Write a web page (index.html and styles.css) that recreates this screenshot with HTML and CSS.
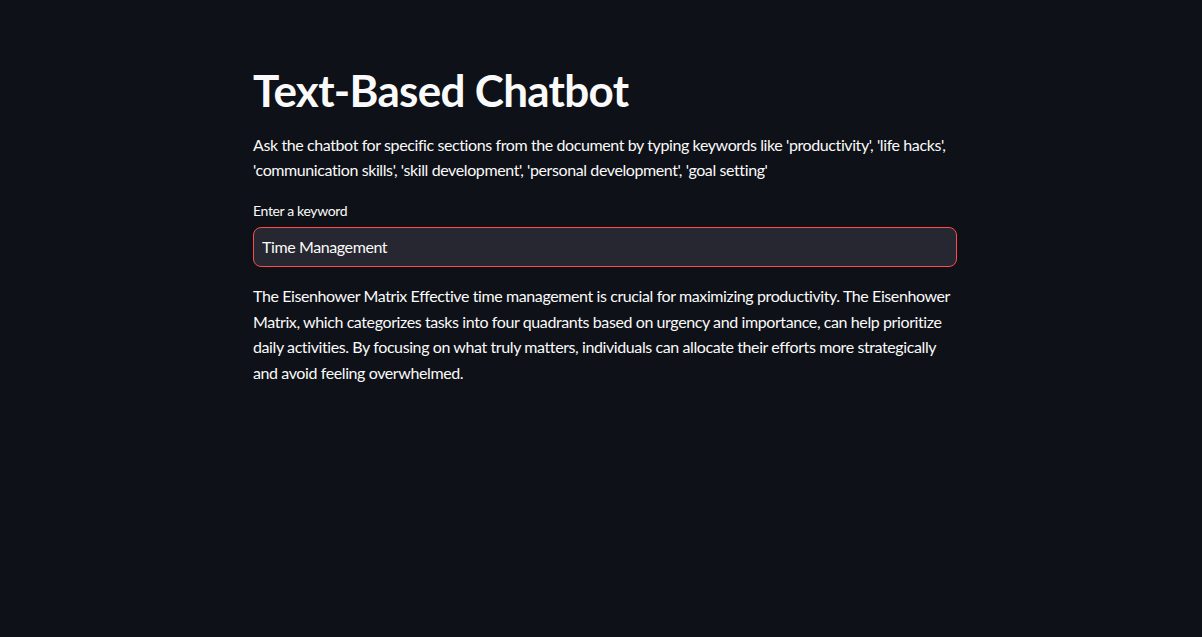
FILE: index.html
```html
<!DOCTYPE html>
<html lang="en">
<head>
<meta charset="utf-8">
<title>Text-Based Chatbot</title>
<link rel="stylesheet" href="styles.css">
</head>
<body>
<div class="app">
  <main class="block">
    <h1 class="title">Text-Based Chatbot</h1>
    <p class="desc">Ask the chatbot for specific sections from the document by typing keywords like 'productivity', 'life hacks', 'communication skills', 'skill development', 'personal development', 'goal setting'</p>
    <div class="field">
      <label class="label" for="kw">Enter a keyword</label>
      <div class="input-wrap">
        <input id="kw" class="input" type="text" value="Time Management">
      </div>
    </div>
    <p class="result">The Eisenhower Matrix Effective time management is crucial for maximizing productivity. The Eisenhower Matrix, which categorizes tasks into four quadrants based on urgency and importance, can help prioritize daily activities. By focusing on what truly matters, individuals can allocate their efforts more strategically and avoid feeling overwhelmed.</p>
  </main>
</div>
</body>
</html>
```
FILE: styles.css
```css
html, body {
  margin: 0;
  padding: 0;
  background: #0e1117;
  height: 100%;
}
body {
  font-family: Lato, "Noto Sans", sans-serif;
  color: #fafafa;
}
.app {
  padding-left: 8px;
  min-height: 100%;
}
.block {
  width: 704px;
  margin: 0 auto;
  padding-top: 64px;
}
.title {
  margin: 0;
  font-size: 44px;
  line-height: 52.8px;
  font-weight: 700;
  letter-spacing: -0.7px;
}
.desc {
  margin: 15px 0 0;
  font-size: 16px;
  line-height: 25.6px;
  letter-spacing: -0.4px;
}
.field {
  margin-top: 17px;
}
.label {
  display: block;
  font-size: 14px;
  line-height: 22.4px;
  margin-bottom: 4.6px;
  letter-spacing: -0.35px;
}
.input-wrap {
  display: flex;
  height: 40px;
  box-sizing: border-box;
  border: 1px solid #ff4b4b;
  border-radius: 8px;
  background: #262730;
}
.input {
  flex: 1;
  border: none;
  outline: none;
  background: transparent;
  color: #fafafa;
  font-family: inherit;
  font-size: 16px;
  letter-spacing: -0.4px;
  padding: 0 8px;
}
.result {
  margin: 16px 0 0;
  font-size: 16px;
  line-height: 25.6px;
  letter-spacing: -0.4px;
}
```
